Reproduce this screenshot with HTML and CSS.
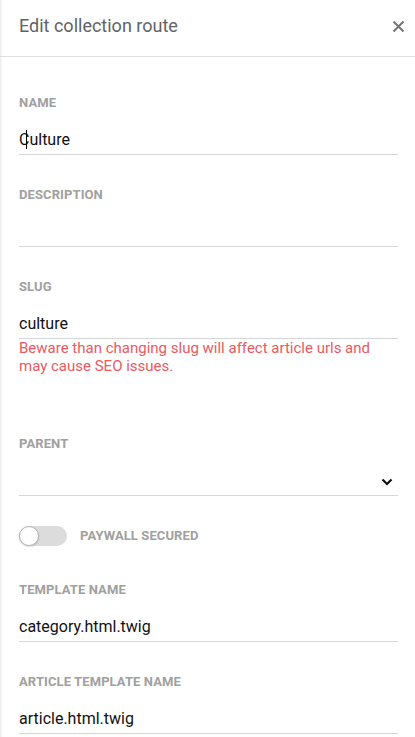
FILE: index.html
```html
<!DOCTYPE html>
<html>
<head>
<meta charset="utf-8">
<link rel="stylesheet" href="styles.css">
</head>
<body>
<div class="panel">
  <header class="head">
    <h1 class="title">Edit collection route</h1>
    <svg class="close" width="13" height="13" viewBox="0 0 13 13"><path d="M1.5 1.5 L11.5 11.5 M11.5 1.5 L1.5 11.5" stroke="#757575" stroke-width="2" fill="none"/></svg>
  </header>
  <main class="body">
    <div class="field">
      <div class="label">Name</div>
      <div class="input">C<span class="caret"></span>ulture</div>
    </div>
    <div class="field">
      <div class="label">Description</div>
      <div class="input"></div>
    </div>
    <div class="field field-err">
      <div class="label">Slug</div>
      <div class="input">culture</div>
      <div class="error">Beware than changing slug will affect article urls and may cause SEO issues.</div>
    </div>
    <div class="field field-select">
      <div class="label">Parent</div>
      <div class="input select">
        <span></span>
        <svg class="chev" width="12" height="8" viewBox="0 0 12 8"><path d="M1.5 1.5 L6 6 L10.5 1.5" stroke="#111" stroke-width="2.2" fill="none"/></svg>
      </div>
    </div>
    <div class="toggle-row">
      <span class="toggle"><span class="knob"></span></span>
      <span class="label">Paywall secured</span>
    </div>
    <div class="field">
      <div class="label">Template name</div>
      <div class="input">category.html.twig</div>
    </div>
    <div class="field">
      <div class="label">Article template name</div>
      <div class="input">article.html.twig</div>
    </div>
  </main>
</div>
</body>
</html>
```
FILE: styles.css
```css
* { box-sizing: border-box; }
html, body { margin: 0; padding: 0; background: #fff; }
body { font-family: Roboto, "Liberation Sans", Arial, sans-serif; height: 737px; overflow: hidden; }
.panel {
  min-height: 737px;
  box-shadow: inset 3px 0 3px -2px rgba(0,0,0,0.10);
}
.head {
  height: 57px;
  border-bottom: 1px solid #dedede;
  display: flex;
  align-items: center;
  justify-content: space-between;
  padding: 0 10px 5px 19px;
}
.title {
  margin: 0;
  font-size: 18px;
  font-weight: 400;
  color: #5f6368;
}
.close { display: block; margin-top: 2px; }
.body {
  padding: 38px 17px 0 19px;
}
.field { margin-bottom: 32px; }
.label {
  font-size: 13px;
  line-height: 16px;
  font-weight: 700;
  letter-spacing: 0.1px;
  text-transform: uppercase;
  color: #a0a0a0;
}
.input {
  margin-top: 19px;
  height: 25px;
  font-size: 16px;
  line-height: 20px;
  color: #111;
  border-bottom: 1px solid #d4d6d8;
}
.caret {
  display: inline-block;
  width: 1px;
  height: 19px;
  background: #000;
  vertical-align: -4px;
  margin-left: -3px;
  margin-right: 2px;
}
.field-err { margin-bottom: 0; }
.error {
  margin-top: 1px;
  margin-bottom: 61px;
  font-size: 15px;
  line-height: 17.5px;
  color: #ea5a5f;
}
.field-select { margin-bottom: 30px; }
.select {
  display: flex;
  justify-content: space-between;
  align-items: center;
  padding-right: 5px;
}
.chev { display: block; margin-bottom: 2px; }
.toggle-row {
  display: flex;
  align-items: center;
  gap: 13px;
  height: 20px;
  margin-bottom: 36px;
}
.toggle {
  position: relative;
  width: 48px;
  height: 20px;
  border-radius: 10px;
  background: #dcdcdc;
  display: inline-block;
}
.knob {
  position: absolute;
  left: 0;
  top: 0;
  width: 20px;
  height: 20px;
  border-radius: 50%;
  background: #fff;
  border: 1px solid #b5b5b5;
  box-shadow: 0 1px 2px rgba(0,0,0,0.15);
}
```
